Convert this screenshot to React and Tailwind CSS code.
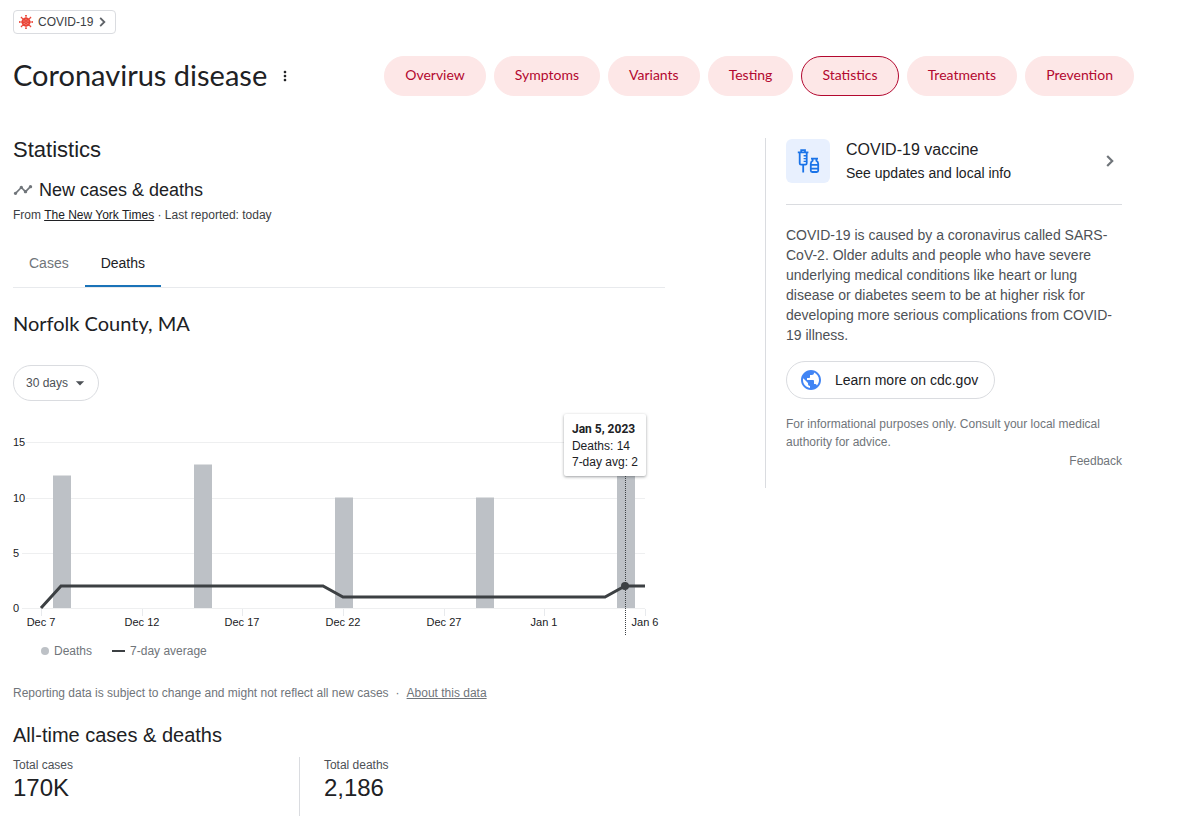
import React, { useState } from "react";
import { MdArrowDropDown, MdMoreVert, MdPublic, MdTimeline } from "react-icons/md";

const TOPICS = ["Overview", "Symptoms", "Variants", "Testing", "Statistics", "Treatments", "Prevention"];

const GRID = [
  { label: "15", y: 37 },
  { label: "10", y: 93 },
  { label: "5", y: 148 },
  { label: "0", y: 203 },
];

const DATES = [
  { label: "Dec 7", x: 28 },
  { label: "Dec 12", x: 129 },
  { label: "Dec 17", x: 229 },
  { label: "Dec 22", x: 330 },
  { label: "Dec 27", x: 431 },
  { label: "Jan 1", x: 531 },
  { label: "Jan 6", x: 632 },
];

const BARS = [
  { x: 40, top: 70.5 },
  { x: 181, top: 59.5 },
  { x: 322, top: 92.5 },
  { x: 463, top: 92.5 },
  { x: 604, top: 48.5 },
];

function VirusIcon() {
  const spokes = [0, 45, 90, 135, 180, 225, 270, 315];
  return (
    <svg viewBox="0 0 24 24" className="size-4 shrink-0" aria-hidden="true">
      {spokes.map((a) => (
        <path
          key={a}
          transform={`rotate(${a} 12 12)`}
          d="M12 7V2.5M10.6 2.4h2.8"
          stroke="#ea4335"
          strokeWidth="1.5"
          fill="none"
        />
      ))}
      <circle cx="12" cy="12" r="6.8" fill="#ea4335" />
      <g fill="#f28b82">
        <circle cx="12" cy="8.5" r="1" />
        <circle cx="9" cy="10.5" r="1" />
        <circle cx="15" cy="10.5" r="1" />
        <circle cx="12" cy="12.2" r="1" />
        <circle cx="9.3" cy="14.2" r="1" />
        <circle cx="14.7" cy="14.2" r="1" />
        <circle cx="12" cy="15.8" r="1" />
      </g>
    </svg>
  );
}

function Chevron({ className }) {
  return (
    <svg viewBox="0 0 8 12" className={className} fill="none" stroke="currentColor" strokeWidth="2.2" aria-hidden="true">
      <path d="M1.2 1l5 5-5 5" />
    </svg>
  );
}

function VaccineIcon() {
  return (
    <svg viewBox="0 0 24 24" className="size-6" fill="none" stroke="#1a73e8" strokeWidth="1.8" aria-hidden="true">
      <path d="M1.8 3.4h10.6M5.2 3.2V1.2h3.8v2M3.7 3.4v10.8q0 1.4 1.4 1.4h4.2q1.4 0 1.4-1.4V3.4M7.2 15.6v7.8" />
      <path d="M10.6 6.8H7.6M10.6 9.6H7.6M10.6 12.4H7.6" strokeWidth="1.4" />
      <path d="M15 9.6h7M16.6 9.8v2q-1.8 1-1.8 3v6.8q0 1.4 1.4 1.4h4.6q1.4 0 1.4-1.4v-6.8q0-2-1.8-3v-2M14.8 15.8h7.4M14.8 19.6h7.4" />
    </svg>
  );
}

function Chart() {
  return (
    <div className="relative mt-1">
      <svg
        viewBox="0 0 652 232"
        className="block h-auto w-full overflow-visible font-['Liberation_Sans',Arial,sans-serif]"
        role="img"
        aria-label="Deaths per day and 7-day average"
      >
        {GRID.map((g) => (
          <path key={g.label} d={`M${g.label.length > 1 ? 13 : 9} ${g.y + 0.5}H632`} stroke="#eeeff0" />
        ))}
        {DATES.map((d) => (
          <path key={d.label} d={`M${d.x + 0.5} 204v7`} stroke="#e8eaed" />
        ))}
        {BARS.map((b) => (
          <rect key={b.x} x={b.x} y={b.top} width="18" height={203 - b.top} fill="#bdc1c6" />
        ))}
        {GRID.map((g) => (
          <text key={g.label} x="0" y={g.y + 4} fontSize="11" fill="#202124">
            {g.label}
          </text>
        ))}
        {DATES.map((d) => (
          <text key={d.label} x={d.x} y="221" fontSize="11" fill="#202124" textAnchor="middle">
            {d.label}
          </text>
        ))}
        <path d="M28 203L48 181H310L330 192H592L612 181H632" fill="none" stroke="#3c4043" strokeWidth="3" />
        <path d="M612.5 71V231" stroke="#3c4043" strokeDasharray="1 1" />
        <circle cx="612" cy="181" r="4" fill="#3c4043" />
      </svg>
      <div className="absolute top-[9px] right-[19px] rounded-xs bg-white px-2 pt-[7px] pb-[6px] text-xs leading-4 whitespace-nowrap text-[#202124] shadow-[0_1px_3px_rgba(60,64,67,0.5)]">
        <p className="font-['Roboto',sans-serif] font-bold">Jan 5, 2023</p>
        <p className="pt-px">Deaths: 14</p>
        <p>7-day avg: 2</p>
      </div>
    </div>
  );
}

export default function App() {
  const [tab, setTab] = useState("Deaths");
  const [range, setRange] = useState("30 days");

  return (
    <div className="bg-white pt-[10px] pb-[7px] pl-[13px] font-['Liberation_Sans',Arial,sans-serif] text-[#202124]">
      <a
        href="#covid"
        className="flex h-6 w-fit items-center rounded-sm border border-[#dadce0] pr-[9px] pl-1 text-xs text-[#3c4043]"
      >
        <VirusIcon />
        <span className="mr-[6px] ml-1">COVID-19</span>
        <Chevron className="h-[10px] w-[7px] text-[#5f6368]" />
      </a>

      <header className="mt-[22px] flex items-center justify-between pr-[54px]">
        <div className="flex items-center gap-[10px]">
          <h1 className="h-10 font-['Lato',sans-serif] text-[29px] leading-[38px] whitespace-nowrap">
            Coronavirus disease
          </h1>
          <button type="button" aria-label="More options" className="grid size-4 place-items-center">
            <MdMoreVert className="size-4" />
          </button>
        </div>
        <nav className="flex gap-2" aria-label="Topics">
          {TOPICS.map((t) => (
            <a
              key={t}
              href={`#${t.toLowerCase()}`}
              className={`flex h-10 items-center rounded-full border bg-[#fde7e7] px-5 pb-0.5 font-['Lato',sans-serif] text-sm text-[#b3082f] ${
                t === "Statistics" ? "border-[#b3082f]" : "border-[#fde7e7]"
              }`}
            >
              {t}
            </a>
          ))}
        </nav>
      </header>

      <div className="mt-[42px] flex items-start gap-[100px] pr-[66px]">
        <main className="min-w-0 flex-1">
          <h2 className="text-[22px] leading-6">Statistics</h2>
          <h3 className="mt-4 flex items-center gap-[6px] text-lg leading-6">
            <MdTimeline className="size-5 text-[#70757a]" />
            New cases &amp; deaths
          </h3>
          <p className="mt-1 text-xs leading-[18px] text-[#3c4043]">
            From{" "}
            <a href="#source" className="text-[#202124] underline">
              The New York Times
            </a>{" "}
            · Last reported: today
          </p>

          <div role="tablist" className="mt-4 flex border-b border-[#e8eaed]">
            {["Cases", "Deaths"].map((t) => (
              <button
                key={t}
                type="button"
                role="tab"
                aria-selected={tab === t}
                onClick={() => setTab(t)}
                className={`h-[47px] border-b-2 px-4 text-sm ${
                  tab === t ? "border-[#1a73b8] text-[#202124]" : "border-transparent text-[#70757a]"
                }`}
              >
                {t}
              </button>
            ))}
          </div>

          <h3 className="mt-6 font-['Lato',sans-serif] text-xl leading-[22px]">Norfolk County, MA</h3>

          <div className="relative mt-[31px] w-fit">
            <select
              aria-label="Time range"
              value={range}
              onChange={(e) => setRange(e.target.value)}
              className="block h-9 w-[86px] appearance-none rounded-full border border-[#dadce0] bg-white pl-3 text-xs text-[#4d5156]"
            >
              <option>30 days</option>
              <option>90 days</option>
              <option>All time</option>
            </select>
            <MdArrowDropDown className="pointer-events-none absolute top-2 right-[9px] size-5 text-[#4d5156]" />
          </div>

          <Chart />

          <div className="mt-[5px] flex items-center gap-5 pl-7 text-xs leading-[18px] text-[#70757a]">
            <span className="flex items-center gap-[5px]">
              <span className="size-2 rounded-full bg-[#bdc1c6]" />
              Deaths
            </span>
            <span className="flex items-center gap-[5px]">
              <span className="h-[2px] w-[13px] bg-[#3c4043]" />
              7-day average
            </span>
          </div>

          <p className="mt-6 text-xs leading-[18px] text-[#70757a]">
            Reporting data is subject to change and might not reflect all new cases
            <span className="mx-[7px]">·</span>
            <a href="#about" className="underline">
              About this data
            </a>
          </p>

          <h2 className="mt-[21px] text-xl leading-6">All-time cases &amp; deaths</h2>
          <dl className="mt-[10px] flex">
            <div className="h-[59px] w-[44%] border-r border-[#dadce0]">
              <dt className="text-xs leading-4 text-[#4d5156]">Total cases</dt>
              <dd className="text-2xl leading-[30px]">170K</dd>
            </div>
            <div className="pl-6">
              <dt className="text-xs leading-4 text-[#4d5156]">Total deaths</dt>
              <dd className="text-2xl leading-[30px]">2,186</dd>
            </div>
          </dl>
        </main>

        <aside className="w-[357px] shrink-0 border-l border-[#dadce0] pb-[18px] pl-5">
          <a href="#vaccine" className="flex items-center border-b border-[#dadce0] pb-5">
            <span className="grid size-11 place-items-center rounded-md bg-[#e8f0fe]">
              <VaccineIcon />
            </span>
            <span className="ml-4 flex-1">
              <span className="block text-base leading-6">COVID-19 vaccine</span>
              <span className="block text-sm leading-[22px]">See updates and local info</span>
            </span>
            <Chevron className="mr-2 h-3 w-2 text-[#70757a]" />
          </a>
          <p className="mt-5 text-sm leading-5 text-[#4d5156]">
            COVID-19 is caused by a coronavirus called SARS-CoV-2. Older adults and people who have severe underlying
            medical conditions like heart or lung disease or diabetes seem to be at higher risk for developing more
            serious complications from COVID-19 illness.
          </p>
          <a
            href="#cdc"
            className="mt-4 flex h-[38px] w-fit items-center gap-3 rounded-full border border-[#dadce0] pr-4 pl-3 text-sm"
          >
            <MdPublic className="size-6 text-[#4285f4]" />
            Learn more on cdc.gov
          </a>
          <p className="mt-4 text-xs leading-[18px] text-[#70757a]">
            For informational purposes only. Consult your local medical authority for advice.
          </p>
          <a href="#feedback" className="mt-px ml-auto block w-fit text-xs leading-[18px] text-[#70757a]">
            Feedback
          </a>
        </aside>
      </div>
    </div>
  );
}
